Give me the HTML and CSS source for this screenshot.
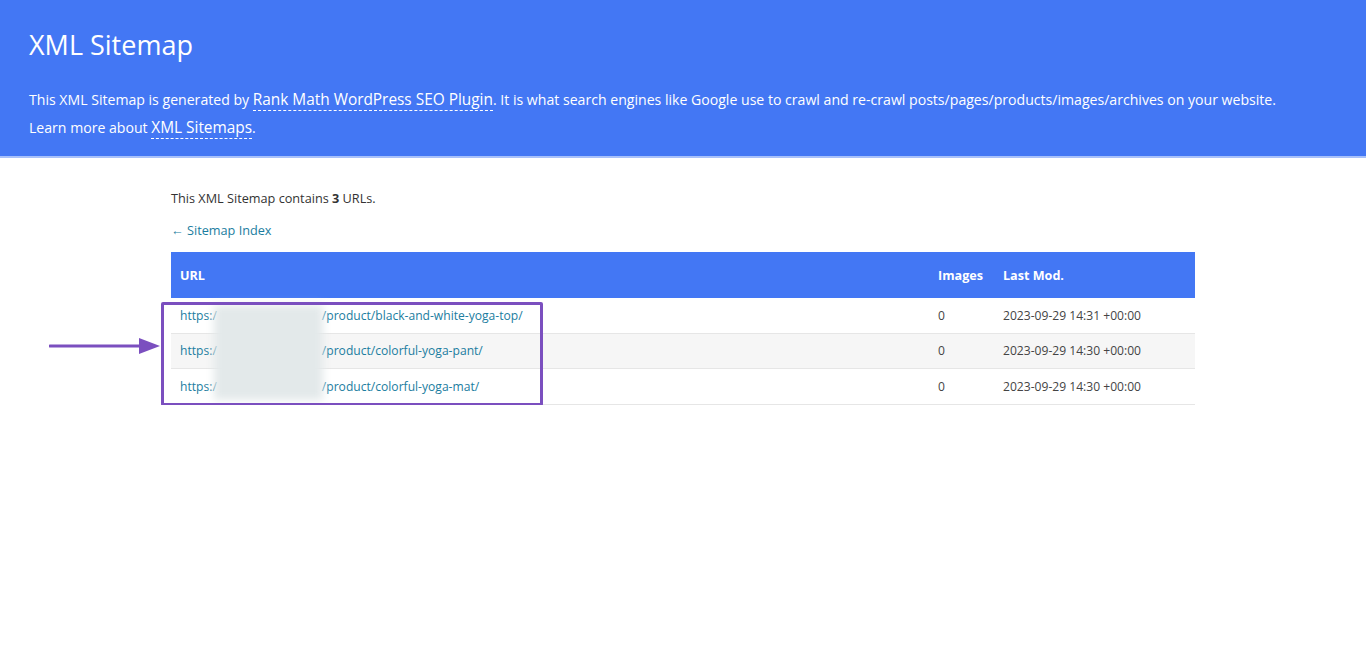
FILE: index.html
```html
<!DOCTYPE html>
<html lang="en">

<head>
  <meta charset="UTF-8" />
  <title>XML Sitemap</title>
  <link rel="stylesheet" href="styles.css">
</head>

<body>
  <div class="header">
    <h1>XML Sitemap</h1>
    <p>
      This XML Sitemap is generated by <a href="#">Rank Math WordPress SEO Plugin</a>. It is what search engines like Google use to crawl and re-crawl posts/pages/products/images/archives on your website.<br>
      Learn more about <a href="#">XML Sitemaps</a>.
    </p>
  </div>

  <div class="content">
    <p class="count">This XML Sitemap contains <strong>3</strong> URLs.</p>
    <p class="back"><a href="#">&larr; Sitemap Index</a></p>

    <div class="tableWrap">
      <table>
        <thead>
          <tr>
            <th class="colUrl">URL</th>
            <th class="colImg">Images</th>
            <th class="colMod">Last Mod.</th>
          </tr>
        </thead>
        <tbody>
          <tr>
            <td><a href="#">https:/<span class="hidden"></span>/product/black-and-white-yoga-top/</a></td>
            <td>0</td>
            <td>2023-09-29 14:31 +00:00</td>
          </tr>
          <tr>
            <td><a href="#">https:/<span class="hidden"></span>/product/colorful-yoga-pant/</a></td>
            <td>0</td>
            <td>2023-09-29 14:30 +00:00</td>
          </tr>
          <tr>
            <td><a href="#">https:/<span class="hidden"></span>/product/colorful-yoga-mat/</a></td>
            <td>0</td>
            <td>2023-09-29 14:30 +00:00</td>
          </tr>
        </tbody>
      </table>

      <!-- annotations drawn over the table -->
      <div class="blur"></div>
      <div class="highlight"></div>
      <svg class="arrow" width="112" height="20" viewBox="0 0 112 20">
        <line x1="1" y1="10" x2="92" y2="10" stroke="#7b4fbf" stroke-width="3" stroke-linecap="round" />
        <polygon points="90,2 111,10 90,18" fill="#7b4fbf" />
      </svg>
    </div>
  </div>
</body>

</html>
```

FILE: styles.css
```css
html {
  background: #fff;
}

body {
  margin: 0;
  font-family: "Open Sans", "Noto Sans", sans-serif;
  color: #444;
}

a {
  color: #1b7da0;
  text-decoration: none;
}

.header {
  background: #4377f4;
  border-bottom: 2px solid #a8c1fa;
  padding: 27px 29px 14px;
  color: #fff;
}

.header h1 {
  margin: 0 0 23px;
  font-size: 27px;
  font-weight: 400;
  line-height: 36px;
}

.header p {
  margin: 0;
  font-size: 14.1px;
  line-height: 28px;
}

.header a {
  color: #fff;
  font-size: 15.4px;
  border-bottom: 1px dashed #fff;
}

.content {
  max-width: 1024px;
  margin: 0 auto;
  padding-top: 30px;
  font-size: 12.7px;
}

.count {
  margin: 0 0 12px;
  line-height: 20px;
  color: #333;
}

.back {
  margin: 0 0 12px;
  line-height: 20px;
}

.tableWrap {
  position: relative;
}

table {
  width: 100%;
  border-collapse: collapse;
  font-size: 12.1px;
}

th {
  background: #4377f4;
  color: #fff;
  text-align: left;
  font-weight: 700;
  font-size: 12.6px;
  height: 46px;
  padding: 0 9px;
}

.colImg {
  width: 47px;
}

.colMod {
  width: 183px;
}

td {
  height: 34.5px;
  padding: 0 9px;
  border-bottom: 1px solid #e6e6e6;
  color: #444;
}

tbody tr:nth-child(2) td {
  background: #f6f6f6;
}

.hidden {
  display: inline-block;
  width: 105px;
}

.blur {
  position: absolute;
  left: 43px;
  top: 53px;
  width: 109px;
  height: 95px;
  background: #e3e9ea;
  filter: blur(4px);
}

.highlight {
  position: absolute;
  left: -10px;
  top: 50px;
  width: 376px;
  height: 98px;
  border: 3px solid #7b4fbf;
  border-radius: 2px;
}

.arrow {
  position: absolute;
  left: -122px;
  top: 84px;
}
```
